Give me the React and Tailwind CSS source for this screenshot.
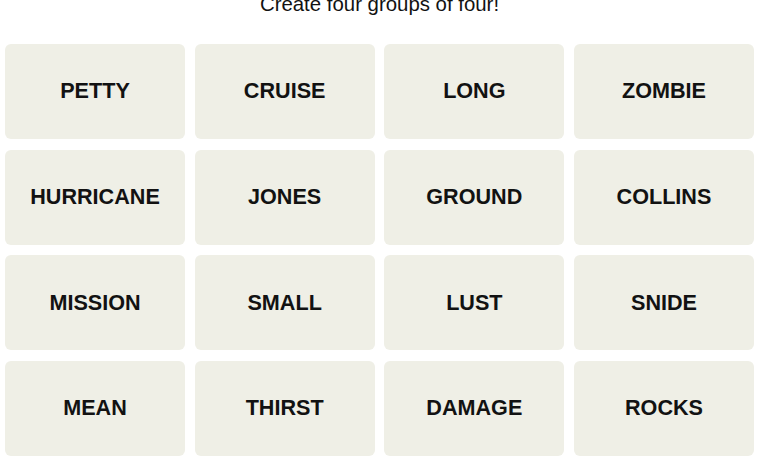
import React from "react";

const words = [
  "PETTY", "CRUISE", "LONG", "ZOMBIE",
  "HURRICANE", "JONES", "GROUND", "COLLINS",
  "MISSION", "SMALL", "LUST", "SNIDE",
  "MEAN", "THIRST", "DAMAGE", "ROCKS",
];

export default function App() {
  return (
    <div
      className="w-[769px] h-[475px] bg-white overflow-hidden"
      style={{ fontFamily: '"Liberation Sans", Arial, sans-serif' }}
    >
      <div className="w-[749px] ml-[5px] flex flex-col items-center">
        <p className="-mt-[8px] text-[20.4px] leading-[24px] text-[#121212]">
          Create four groups of four!
        </p>
        <div className="mt-[28px] w-full grid grid-cols-4 gap-x-[9.67px] gap-y-[10.67px]">
          {words.map((w) => (
            <div
              key={w}
              className="h-[95px] rounded-md bg-[#efefe6] flex items-center justify-center text-[21.6px] font-bold text-[#121212]"
            >
              {w}
            </div>
          ))}
        </div>
      </div>
    </div>
  );
}
